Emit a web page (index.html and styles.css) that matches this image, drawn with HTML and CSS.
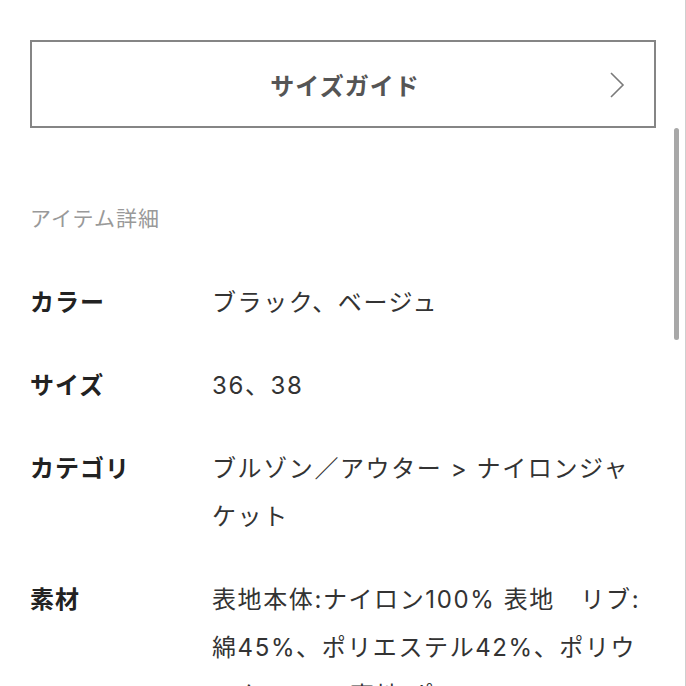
FILE: index.html
```html
<!DOCTYPE html>
<html lang="ja">
<head>
<meta charset="utf-8">
<title>アイテム詳細</title>
<link rel="stylesheet" href="styles.css">
</head>
<body>
<div class="page">
  <div class="content">
    <a class="size-guide" href="#">
      <span class="size-guide-label">サイズガイド</span>
      <svg class="chevron" width="16" height="26" viewBox="0 0 16 26" aria-hidden="true">
        <path d="M2 1 L14 13 L2 25" fill="none" stroke="#7a7a7a" stroke-width="1.6"/>
      </svg>
    </a>
    <h2 class="section-title">アイテム詳細</h2>
    <dl class="details">
      <div class="detail-row">
        <dt class="detail-label">カラー</dt>
        <dd class="detail-value">ブラック、ベージュ</dd>
      </div>
      <div class="detail-row">
        <dt class="detail-label">サイズ</dt>
        <dd class="detail-value">36、38</dd>
      </div>
      <div class="detail-row">
        <dt class="detail-label">カテゴリ</dt>
        <dd class="detail-value">ブルゾン／アウター &gt; ナイロンジャケット</dd>
      </div>
      <div class="detail-row">
        <dt class="detail-label">素材</dt>
        <dd class="detail-value">表地本体:ナイロン100% 表地　リブ:綿45%、ポリエステル42%、ポリウレタン13% 裏地:ポリエステル100%</dd>
      </div>
    </dl>
  </div>
  <div class="scroll-thumb"></div>
</div>
</body>
</html>
```

FILE: styles.css
```css
html, body {
  margin: 0;
  padding: 0;
  background: #fff;
}
body {
  font-family: Inter, "Noto Sans CJK JP", sans-serif;
  color: #333;
}
.page {
  position: relative;
  width: 685px;
  height: 686px;
  overflow: hidden;
  border-right: 1px solid #cfcfcf;
}
.content {
  padding: 40px 0 0 30px;
  width: 626px;
}
.size-guide {
  display: flex;
  align-items: center;
  justify-content: center;
  position: relative;
  box-sizing: border-box;
  height: 88px;
  border: 2px solid #858585;
  text-decoration: none;
}
.size-guide-label {
  font-size: 24px;
  font-weight: 700;
  letter-spacing: 1px;
  margin-left: 4px;
  color: #555;
}
.chevron {
  position: absolute;
  right: 29px;
  top: 30px;
}
.section-title {
  margin: 76px 0 0;
  font-size: 21px;
  line-height: 30px;
  font-weight: 400;
  letter-spacing: 1px;
  color: #999;
}
.details {
  margin: 45px 0 0;
  display: flex;
  flex-direction: column;
  gap: 35px;
}
.detail-row {
  display: grid;
  grid-template-columns: 182px 436px;
  font-size: 24px;
  line-height: 48px;
}
.detail-label {
  margin: 0;
  font-weight: 700;
  color: #222;
  letter-spacing: 1px;
}
.detail-value {
  margin: 0;
  color: #333;
  letter-spacing: 1.6px;
}
.scroll-thumb {
  position: absolute;
  left: 674px;
  top: 128px;
  width: 5px;
  height: 212px;
  border-radius: 3px;
  background: #a8a8a8;
}
```
